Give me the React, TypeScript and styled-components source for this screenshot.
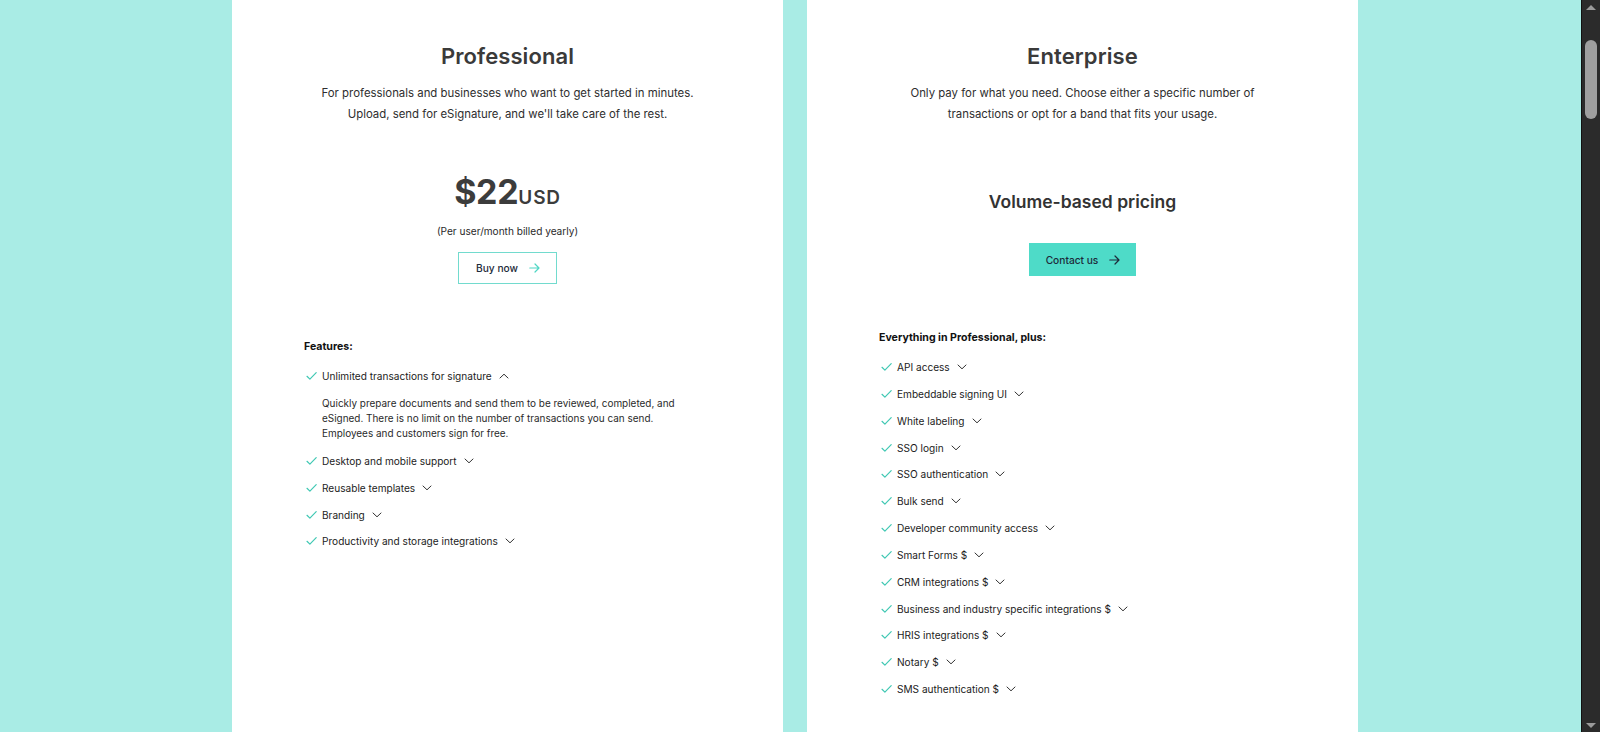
import React from "react";
import styled, { createGlobalStyle } from "styled-components";

const GlobalStyle = createGlobalStyle`
  html { background: #a9ece5; }
  html::-webkit-scrollbar { display: none; }
  body {
    margin: 0;
    background: #a9ece5;
    font-family: Inter, "Liberation Sans", Arial, sans-serif;
    color: #222;
    -webkit-font-smoothing: antialiased;
    scrollbar-width: none;
  }
`;

const Page = styled.main`
  display: flex;
  justify-content: center;
  gap: 24px;
  min-height: 6400px;
  padding-right: 10px;
`;

const ScrollTrack = styled.div`
  position: fixed;
  top: 0;
  right: 0;
  width: 19px;
  height: 100vh;
  background: #2b2b2b;
  border-left: 1px solid #111;
  box-sizing: border-box;
  display: flex;
  flex-direction: column;
  align-items: center;
`;

const ScrollArrow = styled.div<{ $down?: boolean }>`
  width: 0;
  height: 0;
  border-left: 5px solid transparent;
  border-right: 5px solid transparent;
  ${(p) =>
    p.$down
      ? "border-top: 5px solid #9a9a9a; margin-top: auto; margin-bottom: 4px;"
      : "border-bottom: 5px solid #9a9a9a; margin-top: 5px;"}
`;

const ScrollThumb = styled.div`
  margin-top: 30px;
  width: 12px;
  height: 79px;
  border-radius: 6px;
  background: #9f9f9f;
`;

const Card = styled.section`
  width: 551px;
  box-sizing: border-box;
  background: #ffffff;
  padding: 43px 72px 0;
  display: flex;
  flex-direction: column;
`;

const Head = styled.div`
  display: flex;
  flex-direction: column;
  align-items: center;
  text-align: center;
`;

const Title = styled.h2`
  margin: 0;
  font-size: 22px;
  line-height: 26px;
  font-weight: 600;
  color: #3a3a3a;
  letter-spacing: 0.1px;
`;

const Desc = styled.p`
  margin: 14px 0 0;
  max-width: 380px;
  font-size: 11.4px;
  line-height: 21px;
  color: #2e2e2e;
`;

const PriceRow = styled.div`
  margin-top: 47px;
  display: flex;
  align-items: baseline;
  color: #3c3c3c;
  font-weight: 700;
`;

const Amount = styled.span`
  font-size: 34px;
  line-height: 40px;
  letter-spacing: -0.3px;
`;

const Currency = styled.span`
  font-size: 19px;
  line-height: 20px;
  font-weight: 600;
  letter-spacing: 0.8px;
`;

const Billing = styled.div`
  margin-top: 12px;
  font-size: 10.1px;
  line-height: 14px;
  color: #2a2a2a;
`;

const Subtitle = styled.h3`
  margin: 66px 0 0;
  font-size: 17.5px;
  line-height: 22px;
  font-weight: 600;
  color: #333;
`;

const Button = styled.button<{ $filled?: boolean; $mt: number }>`
  margin-top: ${(p) => p.$mt}px;
  display: inline-flex;
  align-items: center;
  gap: 11px;
  box-sizing: border-box;
  height: ${(p) => (p.$filled ? 33 : 32)}px;
  padding: 0 16px 0 17px;
  font-family: inherit;
  font-size: 10.2px;
  font-weight: 500;
  color: #1d2a3a;
  background: ${(p) => (p.$filled ? "#4edbc8" : "#ffffff")};
  border: ${(p) => (p.$filled ? "none" : "1.5px solid #72dbce")};
  border-radius: 0;
  cursor: pointer;
`;

const ListLabel = styled.div<{ $mt: number }>`
  margin-top: ${(p) => p.$mt}px;
  font-size: 10.6px;
  line-height: 14px;
  font-weight: 700;
  color: #111;
`;

const List = styled.ul<{ $mt: number }>`
  list-style: none;
  margin: ${(p) => p.$mt}px 0 0;
  padding: 0;
  display: flex;
  flex-direction: column;
  gap: 12.85px;
`;

const Item = styled.li`
  display: flex;
  flex-direction: column;
`;

const ItemRow = styled.div`
  display: flex;
  align-items: center;
  gap: 4px;
  font-size: 10.1px;
  line-height: 14px;
  color: #1c1c1c;
`;

const Chevron = styled.svg`
  margin-left: 3px;
  flex: none;
`;

const ItemDesc = styled.p`
  margin: 13px 0 0 18px;
  font-size: 9.95px;
  line-height: 15px;
  color: #2a2a2a;
  max-width: 370px;
`;

const Check = () => (
  <svg width="14" height="10" viewBox="0 0 14 10" fill="none">
    <path d="M3 5.3 L5.9 8.1 L12.2 1.6" stroke="#3fc8b3" strokeWidth="1.2" strokeLinecap="round" strokeLinejoin="round" />
  </svg>
);

const Caret = ({ up }: { up?: boolean }) => (
  <Chevron width="10" height="6" viewBox="0 0 10 6" fill="none">
    <path
      d={up ? "M1 5 L5 1.2 L9 5" : "M1 1 L5 4.8 L9 1"}
      stroke="#333"
      strokeWidth="1"
      strokeLinecap="round"
      strokeLinejoin="round"
    />
  </Chevron>
);

const Arrow = ({ color }: { color: string }) => (
  <svg width="11" height="10" viewBox="0 0 11 10" fill="none">
    <path d="M0.8 5 H10 M6 1 L10 5 L6 9" stroke={color} strokeWidth="1.2" strokeLinecap="round" strokeLinejoin="round" />
  </svg>
);

type Feature = { label: string; open?: boolean; detail?: string };

const proFeatures: Feature[] = [
  {
    label: "Unlimited transactions for signature",
    open: true,
    detail:
      "Quickly prepare documents and send them to be reviewed, completed, and eSigned. There is no limit on the number of transactions you can send. Employees and customers sign for free.",
  },
  { label: "Desktop and mobile support" },
  { label: "Reusable templates" },
  { label: "Branding" },
  { label: "Productivity and storage integrations" },
];

const entFeatures: Feature[] = [
  "API access",
  "Embeddable signing UI",
  "White labeling",
  "SSO login",
  "SSO authentication",
  "Bulk send",
  "Developer community access",
  "Smart Forms $",
  "CRM integrations $",
  "Business and industry specific integrations $",
  "HRIS integrations $",
  "Notary $",
  "SMS authentication $",
].map((label) => ({ label }));

const FeatureList = ({ items, mt }: { items: Feature[]; mt: number }) => (
  <List $mt={mt}>
    {items.map((f) => (
      <Item key={f.label}>
        <ItemRow>
          <Check />
          <span>{f.label}</span>
          <Caret up={f.open} />
        </ItemRow>
        {f.open && f.detail && <ItemDesc>{f.detail}</ItemDesc>}
      </Item>
    ))}
  </List>
);

export default function App() {
  return (
    <>
      <GlobalStyle />
      <Page>
        <Card>
          <Head>
            <Title>Professional</Title>
            <Desc>
              For professionals and businesses who want to get started in minutes. Upload, send for
              eSignature, and we'll take care of the rest.
            </Desc>
            <PriceRow>
              <Amount>$22</Amount>
              <Currency>USD</Currency>
            </PriceRow>
            <Billing>(Per user/month billed yearly)</Billing>
            <Button $mt={14}>
              Buy now
              <Arrow color="#4fd6c4" />
            </Button>
          </Head>
          <ListLabel $mt={56}>Features:</ListLabel>
          <FeatureList items={proFeatures} mt={15} />
        </Card>
        <Card>
          <Head>
            <Title>Enterprise</Title>
            <Desc>
              Only pay for what you need. Choose either a specific number of transactions or opt for a
              band that fits your usage.
            </Desc>
            <Subtitle>Volume-based pricing</Subtitle>
            <Button $filled $mt={30}>
              Contact us
              <Arrow color="#1d2a3a" />
            </Button>
          </Head>
          <ListLabel $mt={55}>Everything in Professional, plus:</ListLabel>
          <FeatureList items={entFeatures} mt={15} />
        </Card>
      </Page>
      <ScrollTrack>
        <ScrollArrow />
        <ScrollThumb />
        <ScrollArrow $down />
      </ScrollTrack>
    </>
  );
}
